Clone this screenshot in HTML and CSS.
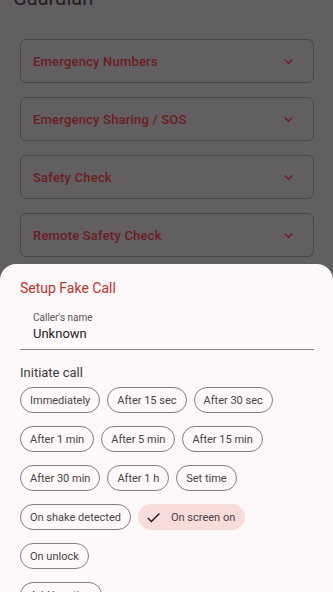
FILE: index.html
```html
<!DOCTYPE html>
<html>
<head>
<meta charset="utf-8">
<link rel="stylesheet" href="styles.css">
</head>
<body>
<div class="page">
  <div class="title">Guardian</div>
  <div class="cards">
    <div class="card"><span>Emergency Numbers</span><svg class="chev" viewBox="0 0 24 24"><path d="M7.4 8.6 12 13.2l4.6-4.6L18 10l-6 6-6-6z"/></svg></div>
    <div class="card"><span>Emergency Sharing / SOS</span><svg class="chev" viewBox="0 0 24 24"><path d="M7.4 8.6 12 13.2l4.6-4.6L18 10l-6 6-6-6z"/></svg></div>
    <div class="card"><span>Safety Check</span><svg class="chev" viewBox="0 0 24 24"><path d="M7.4 8.6 12 13.2l4.6-4.6L18 10l-6 6-6-6z"/></svg></div>
    <div class="card"><span>Remote Safety Check</span><svg class="chev" viewBox="0 0 24 24"><path d="M7.4 8.6 12 13.2l4.6-4.6L18 10l-6 6-6-6z"/></svg></div>
  </div>
</div>
<div class="sheet">
  <div class="sheet-title">Setup Fake Call</div>
  <div class="field">
    <div class="field-label">Caller's name</div>
    <div class="field-value">Unknown</div>
  </div>
  <div class="section">Initiate call</div>
  <div class="chips">
    <div class="chip-row">
      <span class="chip">Immediately</span>
      <span class="chip">After 15 sec</span>
      <span class="chip">After 30 sec</span>
    </div>
    <div class="chip-row">
      <span class="chip">After 1 min</span>
      <span class="chip">After 5 min</span>
      <span class="chip">After 15 min</span>
    </div>
    <div class="chip-row">
      <span class="chip">After 30 min</span>
      <span class="chip">After 1 h</span>
      <span class="chip">Set time</span>
    </div>
    <div class="chip-row">
      <span class="chip">On shake detected</span>
      <span class="chip selected"><svg class="check" viewBox="0 0 24 24"><path d="M9 16.2 4.8 12l-1.4 1.4L9 19 21 7l-1.4-1.4z"/></svg>On screen on</span>
    </div>
    <div class="chip-row">
      <span class="chip">On unlock</span>
    </div>
    <div class="chip-row">
      <span class="chip">Add location</span>
    </div>
  </div>
</div>
</body>
</html>
```
FILE: styles.css
```css
html, body {
  margin: 0;
  padding: 0;
}
body {
  width: 333px;
  height: 592px;
  overflow: hidden;
  background: #625f62;
  font-family: Roboto, "Noto Sans", sans-serif;
  position: relative;
}
.page {
  padding: 0 19px 0 20px;
}
.title {
  margin: -14px 0 0 -7px;
  font-size: 20px;
  line-height: 24px;
  color: #1a1718;
  opacity: 0.9;
}
.cards {
  display: flex;
  flex-direction: column;
  gap: 14px;
  margin-top: 29px;
}
.card {
  height: 42px;
  border: 1px solid #4a4649;
  border-radius: 6px;
  display: flex;
  align-items: center;
  justify-content: space-between;
  padding: 0 16px 0 12px;
  color: #6c1d20;
  font-size: 13px;
  font-weight: 500;
  letter-spacing: 0.2px;
}
.chev {
  width: 17px;
  height: 17px;
  fill: #6c1d20;
}
.sheet {
  position: absolute;
  left: 0;
  right: 0;
  top: 264px;
  bottom: 0;
  overflow: hidden;
  background: #fdf8f9;
  border-radius: 16px 16px 0 0;
  padding: 0 19px 0 20px;
}
.sheet-title {
  margin-top: 14px;
  font-size: 14px;
  line-height: 20px;
  color: #c8302c;
}
.field {
  margin-top: 13px;
  padding: 0 0 6px 13px;
  border-bottom: 1px solid #8a8486;
}
.field-label {
  font-size: 10px;
  line-height: 14px;
  color: #5b5557;
}
.field-value {
  margin-top: 0;
  font-size: 13px;
  line-height: 18px;
  color: #1e1b1c;
}
.section {
  margin-top: 14px;
  font-size: 13px;
  line-height: 18px;
  color: #3f3a3c;
}
.chips {
  display: flex;
  flex-direction: column;
  gap: 13px;
  margin-top: 5px;
}
.chip-row {
  display: flex;
  gap: 7px;
}
.chip {
  box-sizing: border-box;
  height: 26px;
  display: inline-flex;
  align-items: center;
  padding: 0 9px;
  border: 1px solid #8c7b7b;
  border-radius: 13px;
  font-size: 11px;
  color: #4a4244;
  white-space: nowrap;
}
.chip.selected {
  background: #f8dcd9;
  border-color: #f8dcd9;
  padding-left: 6px;
}
.check {
  width: 17px;
  height: 17px;
  fill: #1e1b1c;
  margin-right: 9px;
}
```
